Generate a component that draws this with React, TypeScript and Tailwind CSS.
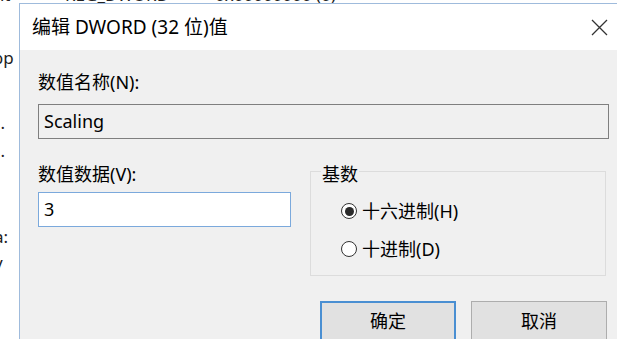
import React from "react";

const font = { fontFamily: '"Noto Sans", "Noto Sans CJK SC", sans-serif' };

function Radio({ checked, label }: { checked?: boolean; label: string }) {
    return (
        <div className="flex items-center h-[24px]">
            <span className="w-[16px] h-[16px] rounded-full border border-[#333] bg-white flex items-center justify-center">
                {checked && <span className="w-[9px] h-[9px] rounded-full bg-[#2a2a2a]" />}
            </span>
            <span className="ml-[5px] text-[18px] text-[#000]">{label}</span>
        </div>
    );
}

export default function App() {
    return (
        <div className="relative w-[617px] h-[339px] bg-white overflow-hidden" style={font}>
            {/* registry editor behind the dialog */}
            <div className="flex flex-col text-[17px] text-[#222] leading-[20px]">
                <div className="flex -mt-[15px] h-[20px]">
                    <span className="w-[85px] -ml-[20px] pl-[0px]">Edit</span>
                    <span className="w-[150px]">REG_DWORD</span>
                    <span>0x00000000 (0)</span>
                </div>
                <span className="mt-[43px] -ml-[18px]">App</span>
                <span className="mt-[45px] -ml-[4px]">..</span>
                <span className="mt-[8px] -ml-[4px]">..</span>
                <span className="mt-[66px] -ml-[6px]">a:</span>
                <span className="mt-[6px] -ml-[6px]">y</span>
            </div>

            {/* dialog window */}
            <div className="absolute left-[19px] top-[3px] w-[610px] h-[360px] border-l border-t border-[#9fbbdc] flex flex-col">
                <div className="h-[46px] bg-white flex items-center justify-between pl-[12px] pr-[21px]">
                    <span className="text-[19px] text-[#000]">编辑 DWORD (32 位)值</span>
                    <svg width="17" height="17" viewBox="0 0 17 17" className="mt-[1px]">
                        <path d="M1 1 L16 16 M16 1 L1 16" stroke="#333" strokeWidth="1.3" />
                    </svg>
                </div>
                <div className="flex-1 bg-[#f0f0f0] pl-[18px] pt-[22px] flex flex-col">
                    <span className="text-[18px] leading-[20px] text-[#000]">数值名称(N):</span>
                    <div className="mt-[12px] w-[571px] h-[35px] border border-[#7f7f7f] bg-[#f0f0f0] flex items-center px-[5px]">
                        <span className="text-[18px] text-[#000]">Scaling</span>
                    </div>
                    <div className="flex mt-[25px]">
                        <div className="flex flex-col w-[272px]">
                            <span className="text-[18px] leading-[20px] text-[#000]">数值数据(V):</span>
                            <div className="mt-[8px] w-[253px] h-[35px] border border-[#7ba9dc] bg-white flex items-center px-[5px]">
                                <span className="text-[18px] text-[#000]">3</span>
                            </div>
                        </div>
                        <div className="flex flex-col w-[296px]">
                            <span className="ml-[11px] px-[1px] text-[18px] leading-[20px] text-[#000] w-fit relative z-10 bg-[#f0f0f0]">基数</span>
                            <div className="-mt-[13px] h-[105px] border border-[#dcdcdc] pl-[30px] pt-[27px] flex flex-col gap-[14px]">
                                <Radio checked label="十六进制(H)" />
                                <Radio label="十进制(D)" />
                            </div>
                        </div>
                    </div>
                    <div className="flex mt-[25px] ml-[282px] gap-[15px]">
                        <button className="w-[136px] h-[42px] border-2 border-[#4a8fd2] bg-[#e1e1e1] text-[18px] text-[#000] pb-[2px]">确定</button>
                        <button className="w-[136px] h-[42px] border border-[#adadad] bg-[#e1e1e1] text-[18px] text-[#000] pb-[2px]">取消</button>
                    </div>
                </div>
            </div>
        </div>
    );
}
